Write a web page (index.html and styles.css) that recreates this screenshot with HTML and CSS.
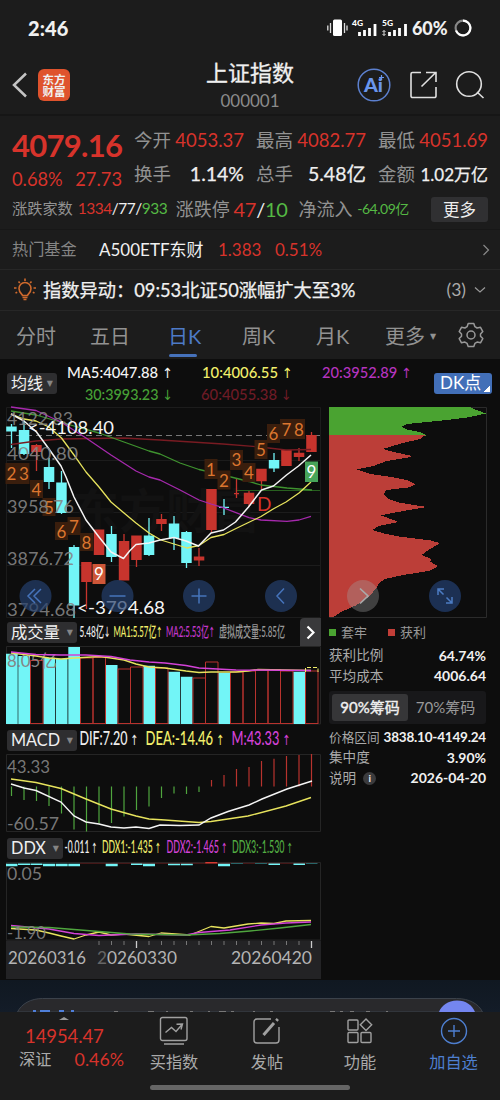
FILE: index.html
```html
<!DOCTYPE html>
<html lang="zh-CN">
<head>
<meta charset="utf-8">
<title>上证指数</title>
<link rel="stylesheet" href="styles.css">
</head>
<body>
<div class="phone">
  <header class="status">
    <span class="clock">2:46</span>
    <svg class="status-icons" width="86" height="24" viewBox="326 16 86 24">
      <rect x="333" y="19.500" width="9" height="16.500" rx="1.500" fill="#fff"/>
      <path d="M330.500 23v10M327.800 25.500v5M344.500 23v10M347 25.500v5" stroke="#ddd" stroke-width="1.300"/>
      <text x="352" y="26" class="net" textLength="11" lengthAdjust="spacingAndGlyphs">4G</text>
      <text x="382" y="26" class="net" textLength="11" lengthAdjust="spacingAndGlyphs">5G</text>
      <path d="M359.500 36v-4M364.500 36v-6M369.500 36v-8M375 36v-12M389.500 36v-4M394.500 36v-6M399.500 36v-8M405.500 36v-12" stroke="#fff" stroke-width="2.800"/>
      <path d="M384 30.500v5M382.500 32l1.500-1.500 1.500 1.500M382.500 34l1.500 1.500 1.500-1.500" stroke="#ddd" fill="none"/>
    </svg>
    <span class="battery">60%</span>
    <svg width="18" height="18" viewBox="0 0 18 18"><circle cx="9" cy="9" r="7.400" fill="none" stroke="#888" stroke-width="2.200"/><path d="M9 1.600A7.400 7.400 0 1 1 2 11.500" fill="none" stroke="#fff" stroke-width="2.200"/></svg>
  </header>

  <nav class="topbar">
    <div class="top-left">
      <svg width="16" height="26" viewBox="0 0 16 26"><path d="M14 1.500 2 13l12 11.500" fill="none" stroke="#c4c4c4" stroke-width="2.500"/></svg>
      <div class="logo"><span>东方</span><span>财富</span></div>
    </div>
    <div class="title"><h1>上证指数</h1><span>000001</span></div>
    <div class="top-right">
      <svg width="34" height="34" viewBox="0 0 34 34"><circle cx="17" cy="17" r="15.800" fill="none" stroke="#5c80cf" stroke-width="1.500"/><text x="7" y="24" class="ai" textLength="19" lengthAdjust="spacingAndGlyphs">Ai</text><path d="M24.500 7v5M22 9.500h5" stroke="#6a96ec" stroke-width="1.200"/></svg>
      <svg width="28" height="28" viewBox="0 0 28 28" fill="none" stroke="#e0e0e0" stroke-width="1.600"><path d="M12 1.500H3.500a1.500 1.500 0 0 0-1.500 1.500v22a1.500 1.500 0 0 0 1.500 1.500h22a1.500 1.500 0 0 0 1.500-1.500V16M12.500 15.500 26.500 1.800M17 1.500h10v9.500"/></svg>
      <svg width="30" height="30" viewBox="0 0 30 30" fill="none" stroke="#e0e0e0" stroke-width="1.600"><circle cx="14" cy="14" r="12.300"/><path d="m22 22 6.500 6"/></svg>
    </div>
  </nav>

  <section class="quote">
    <div class="quote-main">
      <div class="price-box">
        <div class="price">4079.16</div>
        <div class="change"><span>0.68%</span><span>27.73</span></div>
      </div>
      <div class="stats">
        <div><label>今开</label><b class="up">4053.37</b></div>
        <div><label>最高</label><b class="up">4082.77</b></div>
        <div><label>最低</label><b class="up">4051.69</b></div>
        <div><label>换手</label><b class="strong">1.14%</b></div>
        <div><label>总手</label><b class="strong">5.48亿</b></div>
        <div><label>金额</label><b class="strong small">1.02万亿</b></div>
      </div>
    </div>
    <div class="quote-extra">
      <span class="k1">涨跌家数</span><span class="v1"><i class="up">1334</i>/77/<i class="down">933</i></span>
      <span class="k2">涨跌停</span><span class="v2"><i class="up">47</i>/<i class="down">10</i></span>
      <span class="k3">净流入</span><span class="v3">-64.09亿</span>
      <button class="more">更多</button>
    </div>
  </section>

  <section class="fund">
    <span class="fund-label">热门基金</span><span class="fund-name">A500ETF东财</span><span class="up fund-price">1.383</span><span class="up">0.51%</span>
    <svg width="8" height="12" viewBox="0 0 8 12"><path d="m1.500 1 5 5-5 5" fill="none" stroke="#888" stroke-width="1.200"/></svg>
  </section>

  <section class="alert">
    <svg width="22" height="24" viewBox="0 0 22 24" fill="none" stroke="#cf6a2d" stroke-width="1.600"><path d="M8.500 17.500c0-1.500-3.500-2.500-3.500-7a6 6 0 0 1 12 0c0 4.500-3.500 5.500-3.500 7zM8.500 19.500h5M9.500 21.500h3M11 .5V3M4.500 3.500l1.300 1.600M17.500 3.500l-1.300 1.600M0 10h2.500M19.500 10H22M1.500 15l1.700-.8M20.500 15l-1.700-.8"/></svg>
    <span class="alert-text">指数异动：09:53北证50涨幅扩大至3%</span>
    <span class="alert-count">(3)</span>
    <svg width="12" height="8" viewBox="0 0 12 8"><path d="m1 1.500 5 4.500 5-4.500" fill="none" stroke="#999" stroke-width="1.200"/></svg>
  </section>

  <nav class="tabs">
    <span class="t1">分时</span><span class="t2">五日</span><span class="t3 active">日K</span><span class="t4">周K</span><span class="t5">月K</span><span class="t6">更多<i>▼</i></span>
    <svg width="26" height="26" viewBox="-13 -13 26 26" fill="none" stroke="#999" stroke-width="1.500"><path d="M-2.800-11.500h5.600l1.100 3.200 2.200 1.300 3.400-.7 2.300 4.300-2.300 2.400v2.200l2.300 2.400-2.300 4.200-3.400-.7-2.200 1.300-1.100 3.200h-5.600l-1.100-3.200-2.200-1.300-3.400.7-2.300-4.200 2.300-2.400v-2.200l-2.300-2.400 2.300-4.300 3.400.7 2.200-1.300z" stroke-linejoin="round"/><circle r="4"/></svg>
  </nav>

  <main class="market">
    <div class="ma-row">
      <span class="chip">均线<i>▼</i></span>
      <svg width="366" height="44" viewBox="62 361 366 44" class="legend">
        <text x="67" y="378" fill="#f4f4f4" textLength="106" lengthAdjust="spacingAndGlyphs">MA5:4047.88<tspan class="arr"> ↑</tspan></text>
        <text x="202" y="378" fill="#f2ef6b" textLength="91" lengthAdjust="spacingAndGlyphs">10:4006.55<tspan class="arr"> ↑</tspan></text>
        <text x="322" y="378" fill="#b534bf" textLength="90" lengthAdjust="spacingAndGlyphs">20:3952.89<tspan class="arr"> ↑</tspan></text>
        <text x="85" y="400" fill="#47a136" textLength="88" lengthAdjust="spacingAndGlyphs">30:3993.23<tspan class="arr"> ↓</tspan></text>
        <text x="201" y="400" fill="#6e1b26" textLength="91" lengthAdjust="spacingAndGlyphs">60:4055.38<tspan class="arr"> ↓</tspan></text>
      </svg>
      <span class="dk">DK点</span>
    </div>

    <div class="panels">
      <div class="left">
        <svg class="plot" width="321" height="213" viewBox="0 405 321 213">
          <path d="M6.500 407.500h314v210H6.500zM6 460.500h314M6 512.500h314M6 565.500h314" fill="none" stroke="#1c1c1c"/>
          <text x="72" y="528" class="watermark">东方财富</text>
          <path d="M6 435.500h314" stroke="#777" stroke-dasharray="6 4"/>
          <path d="M236 490.500h84" stroke="#28601f"/>
          <g fill="none" stroke="#72f5f7" stroke-width="1.300">
            <path d="M11.500 424v24M24 421v34M49 458v31M61.500 471v43M74 545v73M111.500 526v36M149 518v38M174 516v34M186.500 531v37M224 499v16M219 507.300h10M274 453v19"/>
          </g>
          <g fill="#72f5f7"><path d="M6.200 426.500h10.500v5H6.200zM18.800 430h10.500v24H18.800zM43.800 467h10.500v15H43.800zM56.200 482.500h10.500V513H56.200zM68.800 547h10.500v58.500H68.800zM106.200 534h10.500v23h-10.500zM143.800 535.500h10.500V555h-10.500zM168.800 523.500h10.500V538h-10.500zM181.200 532h10.500v31h-10.500zM268.800 460h10.500v8.500h-10.500z"/></g>
          <path d="M36.500 444v27M86.500 562v47M124 534v46M136.500 536v31M161.500 514v17M199 548v18M211.500 489v43M236.500 478v20M249 491v15M261.500 469v20M286.500 450v16M299 448v13M311.500 432v20M234 493.700h5" stroke="#c7342d" stroke-width="1.300"/>
          <path d="M31.200 445h10.500v7H31.200zM81.200 562h10.500v20H81.200zM93.800 529.500h10.500V555H93.800zM118.800 541h10.500v39.500h-10.500zM131.200 535.500h10.500V560h-10.500zM156.200 519h10.500v5h-10.500zM193.800 556.500h10.500v4h-10.500zM206.200 489h10.500v41h-10.500zM243.800 492.700h10.500V504h-10.500zM256.200 468.700h10.500v12.500h-10.500zM281.200 450h10.500v16h-10.500zM293.800 452.700h10.500v4.300h-10.500zM306.200 435h10.500v17h-10.500z" fill="#c7342d"/>
          <g fill="none" stroke-width="1.300" stroke-linejoin="round">
            <path d="M11 444.500 36 441l25-2 63-1 36 2 63 4 37 3 26 3 25-.5" stroke="#781b22"/>
            <path d="m11 411 25 4 38 11 25 7 25 9 25 9 11 3 20 9 19 6.500 24 5.500 26 6.500 12 3.500 26 3 25 2" stroke="#3f932f"/>
            <path d="m11 407 25 3.500 25 11.500 25 16 25 17 25 16 13 6 11 3 20 10 19 10 12 4 12 3.700 26 10 12 2.300 26 1.300 12-1.300 12-3.700" stroke="#a629ad"/>
            <path d="m11 414 13 5 12 2 13 6 12.500 11L74 455l12 17 13 15 12 15 13 11 12 10 13 10 12 7 13 4 13 4 12-2.500 12-8 13-3 12-6 25-12 13-8 12-6.500 13-9L311 482" stroke="#e7e35d"/>
            <path d="m11 414 13 7 12.500 11L49 449l12 17 5 11 8 20 12 23 13 17 12 15 12.500 6.500 6.500-8 6-6 13-1.500 11-3 14-2.500 12 3.500 12.500 5 12.500-13 12.500-3 12-8 13-15 13-17 12-4 13-11 12-9 12.500-11" stroke="#f5f5f5" stroke-width="1.500"/>
          </g>
          <g class="count" fill="#3a1e0d">
            <path d="M5.500 463h24v21h-24zM30 480h13v18H30zM42.500 498h13v18h-13zM55 522h13v18H55zM67.500 517h13v18h-13zM80 533h13v18H80zM204.500 459h13v20h-13zM217.500 470.500h13v19h-13zM230 450h13v20h-13zM242.500 463h13v19h-13zM254.500 440h13v19h-13zM267 424h13v19h-13zM280 419h25v20h-25z"/>
            <g fill="#dc762f">
              <text x="11.500" y="480">2</text><text x="24" y="480">3</text><text x="36.500" y="496">4</text><text x="49" y="514">5</text><text x="61.500" y="538">6</text><text x="74" y="533">7</text><text x="86.500" y="549">8</text>
              <text x="211" y="476">1</text><text x="224" y="487">2</text><text x="236.500" y="466">3</text><text x="249" y="479">4</text><text x="261" y="456">5</text><text x="273.500" y="440">6</text><text x="286.500" y="436">7</text><text x="299" y="436">8</text>
            </g>
            <path d="M92.500 564h13v20h-13z" fill="#ce5638"/><path d="M305 461.500h13V482h-13z" fill="#47a45a"/>
            <text x="99" y="580" fill="#fff">9</text><text x="311.500" y="477.500" fill="#fff">9</text>
          </g>
          <text x="257" y="510.500" class="d-mark">D</text>
          <g class="axis-label">
            <text x="7" y="424.500" textLength="66" lengthAdjust="spacingAndGlyphs">4122.83</text>
            <text x="7" y="459.500" textLength="71" lengthAdjust="spacingAndGlyphs">4040.80</text>
            <text x="7" y="512.500" textLength="67" lengthAdjust="spacingAndGlyphs">3958.76</text>
            <text x="7" y="565" textLength="67" lengthAdjust="spacingAndGlyphs">3876.72</text>
            <text x="7" y="616" textLength="69" lengthAdjust="spacingAndGlyphs">3794.68</text>
          </g>
          <g class="extreme">
            <text x="28" y="433.500" textLength="86" lengthAdjust="spacingAndGlyphs">&lt;-4108.40</text>
            <text x="77" y="614" textLength="88" lengthAdjust="spacingAndGlyphs">&lt;-3794.68</text>
          </g>
          <g fill="#25406d" fill-opacity=".7"><circle cx="35.500" cy="596" r="16"/><circle cx="117.500" cy="596" r="16"/><circle cx="199" cy="596" r="16"/><circle cx="281" cy="596" r="16"/></g>
          <path d="m35 589-7 7 7 7M41 589l-7 7 7 7M109.500 596h16M191.500 596h15M199 588.500v15M284 588.500l-7 7.500 7 7.500" fill="none" stroke="#4674bb" stroke-width="1.500"/>
        </svg>

        <div class="ind-row">
          <span class="chip">成交量<i>▼</i></span>
          <svg width="210" height="26" viewBox="79 620 210 26" class="legend cond">
            <text x="79.500" y="638" fill="#eee" textLength="31" lengthAdjust="spacingAndGlyphs">5.48亿<tspan class="arr">↓</tspan></text>
            <text x="113.500" y="638" fill="#f2ef6b" textLength="49" lengthAdjust="spacingAndGlyphs">MA1:5.57亿<tspan class="arr">↑</tspan></text>
            <text x="166" y="638" fill="#c438cd" textLength="49" lengthAdjust="spacingAndGlyphs">MA2:5.53亿<tspan class="arr">↑</tspan></text>
            <text x="219" y="638" fill="#999" textLength="66" lengthAdjust="spacingAndGlyphs">虚拟成交量:5.85亿</text>
          </svg>
          <span class="next"><svg width="9" height="15" viewBox="0 0 9 15"><path d="m1.500 1.500 6 6-6 6" fill="none" stroke="#fff" stroke-width="2.200"/></svg></span>
        </div>
        <svg class="plot" width="321" height="80" viewBox="0 646 321 80">
          <path d="M6.500 646.500h314v77.500H6.500z" fill="none" stroke="#252525"/>
          <path d="M6 653.700h11.700V724H6zM18.300 656H30v68H18.300zM43.300 657.700H55V724H43.300zM55.800 659h11.700v65H55.800zM68.300 647H80v77H68.300zM105.800 665h11.700v59h-11.700zM143.300 665.700H155V724h-11.700zM168.300 671.700H180V724h-11.700zM180.800 676.700h11.700V724h-11.700zM218.300 672.700H230V724h-11.700zM293.300 671.700H305V724h-11.700z" fill="#72f5f7"/>
          <path d="M30.500 724v-63.500H43V724M80.500 724v-66H93v66M93 724v-66.500h12.500V724M118 724v-55h12.500v55M130.500 724v-57H143v57M155.500 724v-56H168v56M193 724v-46h12.500v46M205.500 724v-62H218v62M230.500 724v-52H243v52M243 724v-53h12.500v53M255.500 724v-54H268v54M268 724v-54.500h12.500V724M280.500 724v-53H293v53M305.500 724v-53H318v53M30 723.500h13M80 723.500h26M118 723.500h25M155 723.500h13M193 723.500h25M230 723.500h63M305 723.500h13" stroke="#b8332e" fill="none"/>
          <text x="7" y="667" class="vol-label" textLength="50" lengthAdjust="spacingAndGlyphs">8.05亿</text>
          <path d="m11 653 13 1.500 12 1.500 13 2 12 1 13-1 26-1.500 11 1.500 13 2 12 4 13 3 16 1 21 3 13 1.500 12-.5h25l12-1 10-1.500 27 .5 26 .5" fill="none" stroke="#e7e35d" stroke-width="1.400"/>
          <path d="m11 652 25 2.500 25 .5h25l25 1.500 19 3.500 19 2 16 1 21 2.500 13 2.500 37 2 75 .5" fill="none" stroke="#d342d7" stroke-width="1.500"/>
          <path d="M305.500 672v-4.500h12.500v4.500" fill="none" stroke="#f2ef6b" stroke-dasharray="4 2"/>
        </svg>

        <div class="ind-row">
          <span class="chip">MACD<i>▼</i></span>
          <svg width="220" height="26" viewBox="79 728 220 26" class="legend mid">
            <text x="79.500" y="746" fill="#eee" textLength="59" lengthAdjust="spacingAndGlyphs">DIF:7.20<tspan class="arr"> ↑</tspan></text>
            <text x="145.500" y="746" fill="#f2ef6b" textLength="79" lengthAdjust="spacingAndGlyphs">DEA:-14.46<tspan class="arr"> ↑</tspan></text>
            <text x="231.500" y="746" fill="#d342d7" textLength="59" lengthAdjust="spacingAndGlyphs">M:43.33<tspan class="arr"> ↑</tspan></text>
          </svg>
        </div>
        <svg class="plot" width="321" height="80" viewBox="0 754 321 80">
          <path d="M6.500 754.500h314V831.500H6.500z" fill="none" stroke="#252525"/>
          <path d="M11.500 786.500V796M24 786.500V800M36.500 786.500V801M49 786.500V806M61.500 786.500v27M74 786.500v43M86.500 786.500v45M99 786.500v37M111.500 786.500V823M124 786.500v30M136.500 786.500V810M149 786.500v20M161.500 786.500V798M174 786.500v7M186.500 786.500v7.500M199 786.500v5.500" stroke="#4fa53e" stroke-width="1.200"/>
          <path d="M211.500 786.500V780M224 786.500V775M236.500 786.500V769M249 786.500V767M261.500 786.500V761M274 786.500V758.700M286.500 786.500V756M299 786.500V755M311.500 786.500V754" stroke="#b8332e" stroke-width="1.200"/>
          <g class="axis-label"><text x="7" y="772.500" textLength="43" lengthAdjust="spacingAndGlyphs">43.33</text><text x="7" y="830" textLength="52" lengthAdjust="spacingAndGlyphs">-60.57</text></g>
          <path d="m11 779 25 3.500 25 6 25 10.500 25 10 25 7 13 3 16 1 34 2.500 12-1 37-5.500 38-10 25-8.500" fill="none" stroke="#e7e35d" stroke-width="1.400"/>
          <path d="m11 784 13 4 12 2.500L61 802l13 14 12 6 13 2 12 3 13 1 12-1 13 1.500 11-3.500 20 .5 19-.5 12-7 17-6.500 21-6.500 13-6 25-10 25-8" fill="none" stroke="#f5f5f5" stroke-width="1.400"/>
        </svg>

        <div class="ind-row ddx-row">
          <span class="chip">DDX<i>▼</i></span>
          <svg width="232" height="26" viewBox="64 836 232 26" class="legend slim">
            <text x="64.500" y="853.500" fill="#eee" textLength="33" lengthAdjust="spacingAndGlyphs">-0.011<tspan class="arr"> ↑</tspan></text>
            <text x="102" y="853.500" fill="#f2ef6b" textLength="59" lengthAdjust="spacingAndGlyphs">DDX1:-1.435<tspan class="arr"> ↑</tspan></text>
            <text x="166.500" y="853.500" fill="#d342d7" textLength="61" lengthAdjust="spacingAndGlyphs">DDX2:-1.465<tspan class="arr"> ↑</tspan></text>
            <text x="232" y="853.500" fill="#52ad43" textLength="61" lengthAdjust="spacingAndGlyphs">DDX3:-1.530<tspan class="arr"> ↑</tspan></text>
          </svg>
        </div>
        <svg class="plot" width="321" height="117" viewBox="0 862 321 117">
          <path d="M6.500 862.500h314V940H6.500z" fill="none" stroke="#252525"/>
          <path d="M80 863.300h237" stroke="#531b1b"/>
          <path d="M6 865h11.500M43 865h12M55.700 865h12M68.300 865H80M105.700 865h12M143 865h12M218 865h12" stroke="#72f5f7" stroke-width="2.500"/>
          <path d="M18 864.200h12M30.500 864.200h12M131 864.200h11.500M168 864.500h12M180.800 864.500h12M268.500 864.200H280M293.500 864.200H305" stroke="#72f5f7" stroke-width="1.600"/>
          <path d="M231 863.500h12M255 863.500h12M306 863.500h11.500" stroke="#286568"/>
          <path d="M205.300 862.500h12" stroke="#d43b32" stroke-width="1.800"/>
          <g fill="none" stroke-width="1.300" stroke-linejoin="round">
            <path d="m11 928.500 25 1.500 13 3 12 3 13 3 12-4 13-3 12 3 13-1 25 2.500 12-3.500 29 2 10-4 11-4.500 13 1.500 12-2 12-2 13-1 13 .5 12-2.500 25-.5" stroke="#e7e35d"/>
            <path d="m11 925.500 38 3.500 25 4.500 25 2 37-1.500 50 1 13-2.500 31-2.500 31-5 25-2 25-1" stroke="#d342d7"/>
            <path d="m11 927 38 .5 25 2 25 2 31 2.500 56 1 34-1.500 30-2.500 30-3 31-3.500" stroke="#4fa53e"/>
          </g>
          <g class="axis-label"><text x="7" y="880" textLength="35" lengthAdjust="spacingAndGlyphs">0.05</text><text x="7" y="939" textLength="39" lengthAdjust="spacingAndGlyphs">-1.90</text></g>
          <path d="M6 940.500h315V979H6z" fill="#232325"/>
          <path d="M99 941v4M111.500 941v4M124 941v4M149 941v4M161.500 941v4M174 941v4M186.500 941v4M199 941v4M211.500 941v4M224 941v4M236.500 941v4M249 941v4M261.500 941v4M274 941v4M286.500 941v4M299 941v4" stroke="#777"/>
          <path d="M136.500 941v7M311.500 941v7" stroke="#ccc" stroke-width="1.300"/>
          <g class="dates"><text x="8" y="964" textLength="78" lengthAdjust="spacingAndGlyphs">20260316</text><text x="97" y="964" textLength="80" lengthAdjust="spacingAndGlyphs"><tspan fill="#666">2</tspan>0260330</text><text x="231" y="964" textLength="81" lengthAdjust="spacingAndGlyphs">20260420</text></g>
        </svg>
      </div>

      <aside class="chips">
        <svg class="plot" width="159" height="213" viewBox="329 405 159 213">
          <path d="M329.500 407.500h157v210h-157z" fill="none" stroke="#2b2b2b"/>
          <path d="M329 407h141l5 2.500 11 4-19 4-20.300 2.500-26.700 2.700-13.300 1.300-4.700 2.700 5 2.800 13 2.500 6 3v.5h-97z" fill="#4aa331" shape-rendering="crispEdges"/>
          <path d="M329 435.400h96l-5 3.600-18.300 4.300-13.400 4-5.600 1.700 14 3.700 15.600 3.300-5 1.700-20.600 3.300-13.400 5-16.600 3.300 13.300 4.700 23.300 3.300 13.400 2.700 8.600 4.300-6 3-22.600 2.700-3.400 4 5 5 11.700 3.700 26.700 4.300-23.400 4-22.600 4.300 9.300 3.400 8.700 3.300-20.400 4-5.600 4 10.600 3.300 16.700 3.400 30 3.600 10 2.700-8.300 5.300-5 2.700-5 4 8.300 3.300 1.700 1.700-1.700 1.700 8.300 4.300-8.300 4.700-26.700 4.300-18.300 4-5.700 3.700-2.600 4.600-6.700 8.700-13.300 9-15 6.700-9 5.600H329z" fill="#bc3e38" shape-rendering="crispEdges"/>
          <circle cx="363" cy="596" r="16" fill="#a0a0a0" fill-opacity=".35"/><circle cx="445" cy="596" r="16" fill="#1c3053"/>
          <path d="m360 588.500 8 7.500-8 7.500" fill="none" stroke="#aaa" stroke-width="1.700"/>
          <path d="m443.500 594.500-5.500-5.500m0 6v-6h6M446.500 597.500l5.500 5.500m0-6v6h-6" fill="none" stroke="#4c7cc4" stroke-width="1.500"/>
        </svg>
        <div class="chip-key"><i class="k-green"></i><span>套牢</span><i class="k-red"></i><span>获利</span></div>
        <div class="kv"><span>获利比例</span><b>64.74%</b></div>
        <div class="kv"><span>平均成本</span><b>4006.64</b></div>
        <div class="segment"><span class="on">90%筹码</span><span>70%筹码</span></div>
        <div class="kv range"><span>价格区间</span><b>3838.10-4149.24</b></div>
        <div class="kv"><span>集中度</span><b>3.90%</b></div>
        <div class="kv"><span>说明<em>i</em></span><b>2026-04-20</b></div>
      </aside>
    </div>
  </main>

  <div class="peek">
    <svg width="500" height="32" viewBox="0 980 500 32"><path d="M17.500 1012c4-8 13-13.500 25-13.500h414c13 0 22 5.500 26 13.500z" fill="#29292c" stroke="#3b424b"/><path d="M439 1012c2-6 9-11.500 18-11.500s15 4.500 18 11.500z" fill="#7486f0"/><path d="M33 1011h3M40 1011h10M59 1011h5M71 1011h3" stroke="#4f7fd9" stroke-width="2"/><path d="M114 1011.500h4M148 1011.500h6M166 1011.500h2M190 1011.500h3M208 1011.500h2M219 1011.500h7M231 1011.500h3M253 1011.500h2M270 1011.500h3M330 1011.500h5M340 1011.500h3M350 1011.500h4M366 1011.500h4M386 1011.500h2" stroke="#777"/></svg>
  </div>
  <footer class="bottom">
    <div class="shen"><svg width="10" height="3" viewBox="0 0 10 3"><path d="m0 3 5-3 5 3z" fill="#999"/></svg><strong>14954.47</strong><div><span>深证</span><b>0.46%</b></div></div>
    <div class="act"><svg width="30" height="30" viewBox="0 0 30 30"><rect x="1.500" y="1.500" width="26.500" height="23" rx="2"/><path d="m6.500 16.500 6-5 4.500 4 6-7M17.500 8.200l6-.2-1.500 5.500M5 28h20"/></svg><span>买指数</span></div>
    <div class="act"><svg width="30" height="30" viewBox="0 0 30 30"><path d="M19 3H5a3 3 0 0 0-3 3v18a3 3 0 0 0 3 3h19a3 3 0 0 0 3-3V11"/><path d="m11.500 19 10.500-12" stroke-width="3"/><path d="m24.300 4.700 1.500-1.700" stroke-width="3"/></svg><span>发帖</span></div>
    <div class="act"><svg width="30" height="30" viewBox="0 0 30 30"><rect x="3" y="4" width="10" height="10" rx="1"/><rect x="3" y="16.500" width="10" height="10" rx="1"/><rect x="16" y="16.500" width="10" height="10" rx="1"/><path d="m21 3 5.700 5.700-5.700 5.700-5.700-5.700z"/></svg><span>功能</span></div>
    <div class="act add"><svg width="30" height="30" viewBox="0 0 30 30"><circle cx="15" cy="15" r="12.500"/><path d="M15 9v12M9 15h12"/></svg><span>加自选</span></div>
    <i class="home"></i>
  </footer>
</div>
</body>
</html>
```
FILE: styles.css
```css
* { box-sizing: border-box; }
body { margin: 0; background: #1c1c1c; }
i, em { font-style: normal; }
b, strong { font-weight: 400; }
svg { display: block; flex: none; }
.phone { width: 500px; height: 1100px; overflow: hidden; background: #1c1c1c; color: #f0f0f0; font-family: Lato, "Noto Sans CJK SC", sans-serif; font-size: 16px; line-height: 1; white-space: nowrap; }
.up { color: #d7332b; }
.down { color: #55b944; }

.status { height: 56px; display: flex; align-items: center; padding: 0 28px; }
.clock { font-size: 20px; font-weight: 900; letter-spacing: .1px; margin-right: auto; }
.net { font: 900 8px Lato, sans-serif; fill: #fff; }
.battery { font-size: 18px; font-weight: 900; width: 42px; letter-spacing: -.1px; }

.topbar { height: 60px; display: grid; grid-template-columns: 160px 180px 160px; border-bottom: 2px solid #161616; }
.top-left { display: flex; align-items: center; gap: 10px; padding-left: 12px; }
.logo { width: 32px; height: 32px; border-radius: 6px; background: #df532d; display: grid; place-content: center; text-align: center; font: 700 11.500px/12.500px "Noto Sans CJK SC", sans-serif; }
.title { text-align: center; padding-top: 5px; }
.title h1 { margin: 0; font-size: 22px; font-weight: 400; line-height: 24px; -webkit-text-stroke: .3px #f0f0f0; }
.title span { display: block; margin-top: 7px; color: #8b8b8b; font-size: 17px; line-height: 17px; }
.top-right { display: flex; align-items: center; gap: 18px; padding-left: 17px; }
.ai { font: 900 19px Lato, sans-serif; fill: #6a96ec; }

.quote { height: 114px; padding: 7px 12px 0; border-bottom: 1px solid #171717; }
.quote-main { display: flex; height: 70px; }
.price-box { width: 122px; }
.price { color: #d7332b; font-size: 31px; font-weight: 700; line-height: 44px; letter-spacing: -.7px; }
.change { color: #d7332b; display: flex; justify-content: space-between; width: 110px; font-size: 18.300px; line-height: 24px; }
.stats { display: grid; grid-template-columns: repeat(3, 110px); column-gap: 12px; grid-template-rows: 34px 34px; }
.stats div { display: flex; justify-content: space-between; align-items: center; }
.stats label { font-size: 18.500px; color: #929292; }
.stats b { font-size: 18.500px; }
.stats .strong { font-size: 19.500px; -webkit-text-stroke: .25px #f0f0f0; }
.stats .small { font-size: 17px; }
.quote-extra { display: flex; align-items: center; height: 32px; color: #929292; }
.k1 { font-size: 15.200px; width: 66px; }
.v1 { font-size: 15.500px; width: 98px; color: #f0f0f0; letter-spacing: -.5px; }
.k2 { font-size: 18px; width: 58px; }
.v2 { font-size: 20px; width: 65px; color: #f0f0f0; letter-spacing: -.3px; }
.k3 { font-size: 18px; width: 59px; }
.v3 { font-size: 14px; color: #55b944; width: 74px; letter-spacing: -.5px; }
.more { width: 57px; height: 25px; padding: 0; border: 0; border-radius: 3px; background: #303032; color: #eee; font: 400 16.500px/24px "Noto Sans CJK SC", sans-serif; }

.fund { height: 40px; display: flex; align-items: center; padding: 0 10px 0 12px; font-size: 17px; border-bottom: 1px solid #272727; }
.fund-label { color: #858585; font-size: 16.200px; width: 87px; }
.fund-name { width: 119px; font-size: 17px; }
.fund-price { width: 57px; }
.fund svg { margin-left: auto; }
.alert { height: 41px; display: flex; align-items: center; padding: 0 14px; border-bottom: 1px solid #272727; }
.alert-text { font-size: 18.250px; margin-left: 7px; -webkit-text-stroke: .25px #f0f0f0; }
.alert-count { margin: 0 8px 0 auto; color: #aaa; font-size: 17.500px; }

.tabs { height: 48px; display: flex; align-items: center; padding: 0 16px; font-size: 20px; color: #929292; }
.tabs span { height: 46px; line-height: 48px; position: relative; }
.t1 { width: 74px; } .t2 { width: 78px; } .t3 { width: 74px; } .t4 { width: 74px; } .t5 { width: 69px; } .t6 { width: 73px; }
.t6 i { font-size: 8px; font-family: "DejaVu Sans", sans-serif; vertical-align: 5px; margin-left: 5px; }
.tabs .active { color: #4d7ac7; }
.active::after { content: ""; position: absolute; left: 1px; bottom: 1px; width: 28px; height: 3px; border-radius: 2px; background: #4672bb; }

.market { height: 621px; background: #0d0d0d; padding-top: 2px; }
.ma-row { height: 44px; display: flex; align-items: center; padding-left: 7px; }
.chip { display: flex; align-items: center; justify-content: space-between; height: 21px; width: 70px; padding: 0 4px; border-radius: 3px; background: #2e2e30; color: #f0f0f0; font-size: 16.300px; }
.chip i { font: 8px "DejaVu Sans", sans-serif; color: #858585; }
.ma-row .chip { width: 50px; font-size: 16px; margin-right: 5px; }
.dk { width: 58px; height: 21px; line-height: 20px; padding-left: 6px; margin-left: 6px; border-radius: 3px; color: #fff; font-size: 17px; background: linear-gradient(135deg, #426fb8 50%, #fff 50%) 50px 13px / 6px 6px no-repeat #426fb8; }
.legend text { font: 500 16px Lato, "Noto Sans CJK SC", sans-serif; }
.legend .arr { font-family: "DejaVu Sans", sans-serif; font-size: 14px; }
.legend.cond text { font-size: 15px; }
.legend.mid text { font-size: 18.500px; }
.legend.slim text { font-size: 17px; }
.panels { display: grid; grid-template-columns: 321px 159px; column-gap: 8px; }
.axis-label text { font: 18px Lato, sans-serif; fill: #858585; fill-opacity: .9; }
.extreme text { font: 18px Lato, sans-serif; fill: #f5f5f5; }
.count text { font: 17px Lato, sans-serif; text-anchor: middle; }
.d-mark { font: 19px Lato, sans-serif; fill: #d7332b; }
.watermark { font: 700 47px "Noto Sans CJK SC", sans-serif; fill: #121212; }
.vol-label { font: 17px Lato, "Noto Sans CJK SC", sans-serif; fill: #858585; }
.dates text { font: 18px Lato, sans-serif; fill: #b4b4b4; }
.ind-row { height: 28px; display: flex; align-items: center; padding-left: 7px; gap: 2px; }
.next { width: 21px; height: 28px; margin-left: auto; background: #39393b; border-radius: 4px 0 0 0; display: grid; place-items: center; }
.ddx-row { gap: 1px; }
.ddx-row .chip { width: 56px; }

.chip-key { display: flex; align-items: center; height: 28px; padding-top: 1px; font-size: 13px; color: #999; }
.chip-key i { width: 7px; height: 7px; }
.chip-key span { margin-left: 5px; width: 47px; }
.k-green { background: #4aa331; } .k-red { background: #c23e38; }
.kv { width: 157px; height: 20.300px; display: flex; justify-content: space-between; align-items: center; font-size: 13.600px; color: #aaa; }
.kv b { color: #f0f0f0; font-weight: 700; font-size: 14px; }
.kv.range span { font-size: 12.700px; }
.range b { font-size: 13.500px; letter-spacing: -.2px; }
.kv em { display: inline-block; width: 13px; height: 13px; margin-left: 7px; border-radius: 50%; background: #3b3b3d; color: #eee; font-size: 10px; font-weight: 700; line-height: 13px; text-align: center; vertical-align: 1px; }
.segment { width: 157px; height: 33px; margin: 4px 0; padding: 3px; background: #18181a; display: grid; grid-template-columns: 76px 1fr; text-align: center; border-radius: 3px; font-size: 15px; line-height: 26px; color: #999; }
.segment .on { background: #363638; color: #f0f0f0; border-radius: 3px; -webkit-text-stroke: .4px #f0f0f0; }

.peek { height: 32px; background: linear-gradient(#101821, #131c28); }
.bottom { height: 88px; position: relative; display: grid; grid-template-columns: 127px 94px 92px 94px 93px; background: #1c1c1c; color: #aaa; }
.shen { color: #d7332b; padding: 5px 3px 0 19px; }
.shen svg { margin-left: 40px; }
.shen strong { display: block; font-size: 18.500px; line-height: 24px; margin: 4px 0 0 6px; letter-spacing: -.1px; }
.shen div { display: flex; justify-content: space-between; align-items: center; height: 23px; font-size: 17.800px; }
.shen span { color: #aaa; font-size: 16.200px; }
.act { display: flex; flex-direction: column; align-items: center; padding-top: 4px; gap: 8px; font-size: 16.200px; }
.act svg { fill: none; stroke: #a0a0a0; stroke-width: 1.400; }
.act.add { color: #4e7fd0; }
.act.add svg { stroke: #4e7fd0; }
.home { position: absolute; left: 150px; top: 73px; width: 200px; height: 5px; border-radius: 3px; background: #656565; }
```
